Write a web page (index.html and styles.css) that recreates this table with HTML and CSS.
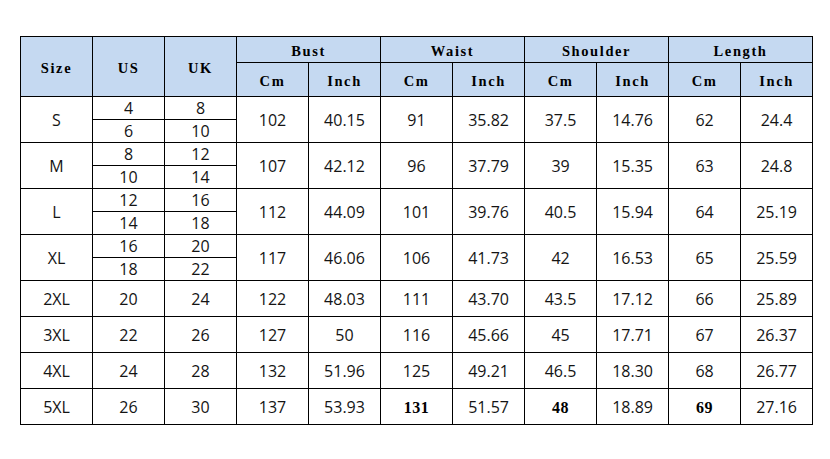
FILE: index.html
```html
<!DOCTYPE html>
<html>
<head>
<meta charset="utf-8">
<link rel="stylesheet" href="styles.css">
</head>
<body>
<table class="chart">
  <colgroup>
    <col><col><col><col><col><col><col><col><col><col><col>
  </colgroup>
  <thead>
    <tr class="h1">
      <th rowspan="2">Size</th>
      <th rowspan="2">US</th>
      <th rowspan="2">UK</th>
      <th colspan="2">Bust</th>
      <th colspan="2">Waist</th>
      <th colspan="2">Shoulder</th>
      <th colspan="2">Length</th>
    </tr>
    <tr class="h2">
      <th>Cm</th><th>Inch</th>
      <th>Cm</th><th>Inch</th>
      <th>Cm</th><th>Inch</th>
      <th>Cm</th><th>Inch</th>
    </tr>
  </thead>
  <tbody>
    <tr class="sub"><td rowspan="2">S</td><td>4</td><td>8</td><td rowspan="2">102</td><td rowspan="2">40.15</td><td rowspan="2">91</td><td rowspan="2">35.82</td><td rowspan="2">37.5</td><td rowspan="2">14.76</td><td rowspan="2">62</td><td rowspan="2">24.4</td></tr>
    <tr class="sub"><td>6</td><td>10</td></tr>
    <tr class="sub"><td rowspan="2">M</td><td>8</td><td>12</td><td rowspan="2">107</td><td rowspan="2">42.12</td><td rowspan="2">96</td><td rowspan="2">37.79</td><td rowspan="2">39</td><td rowspan="2">15.35</td><td rowspan="2">63</td><td rowspan="2">24.8</td></tr>
    <tr class="sub"><td>10</td><td>14</td></tr>
    <tr class="sub"><td rowspan="2">L</td><td>12</td><td>16</td><td rowspan="2">112</td><td rowspan="2">44.09</td><td rowspan="2">101</td><td rowspan="2">39.76</td><td rowspan="2">40.5</td><td rowspan="2">15.94</td><td rowspan="2">64</td><td rowspan="2">25.19</td></tr>
    <tr class="sub"><td>14</td><td>18</td></tr>
    <tr class="sub"><td rowspan="2">XL</td><td>16</td><td>20</td><td rowspan="2">117</td><td rowspan="2">46.06</td><td rowspan="2">106</td><td rowspan="2">41.73</td><td rowspan="2">42</td><td rowspan="2">16.53</td><td rowspan="2">65</td><td rowspan="2">25.59</td></tr>
    <tr class="sub"><td>18</td><td>22</td></tr>
    <tr class="full"><td>2XL</td><td>20</td><td>24</td><td>122</td><td>48.03</td><td>111</td><td>43.70</td><td>43.5</td><td>17.12</td><td>66</td><td>25.89</td></tr>
    <tr class="full"><td>3XL</td><td>22</td><td>26</td><td>127</td><td>50</td><td>116</td><td>45.66</td><td>45</td><td>17.71</td><td>67</td><td>26.37</td></tr>
    <tr class="full"><td>4XL</td><td>24</td><td>28</td><td>132</td><td>51.96</td><td>125</td><td>49.21</td><td>46.5</td><td>18.30</td><td>68</td><td>26.77</td></tr>
    <tr class="full"><td>5XL</td><td>26</td><td>30</td><td>137</td><td>53.93</td><td class="bold">131</td><td>51.57</td><td class="bold">48</td><td>18.89</td><td class="bold">69</td><td>27.16</td></tr>
  </tbody>
</table>
</body>
</html>
```
FILE: styles.css
```css
html, body {
  margin: 0;
  padding: 0;
  background: #ffffff;
}

body {
  padding: 36px 0 0 20px;
}

.chart {
  border-collapse: collapse;
  table-layout: fixed;
  width: 793px;
  font-family: "Open Sans", "Noto Sans", sans-serif;
  font-size: 16px;
  color: #141414;
}

.chart col {
  width: 72px;
}

.chart th,
.chart td {
  border: 1px solid #000;
  padding: 0;
  text-align: center;
  vertical-align: middle;
  line-height: 1;
}

.chart th {
  background: #c5d9f1;
  font-family: "Liberation Serif", "Times New Roman", serif;
  font-weight: bold;
  font-size: 14.5px;
  letter-spacing: 1.6px;
  color: #000;
  padding-top: 4px;
}

.h1 {
  height: 26px;
}

.h2 {
  height: 34px;
}

.sub {
  height: 23px;
}

.full {
  height: 36px;
}

.chart td.bold {
  font-family: "Liberation Serif", "Times New Roman", serif;
  font-weight: bold;
  font-size: 16px;
  letter-spacing: 0.5px;
  color: #000;
  padding-top: 2px;
}
```
